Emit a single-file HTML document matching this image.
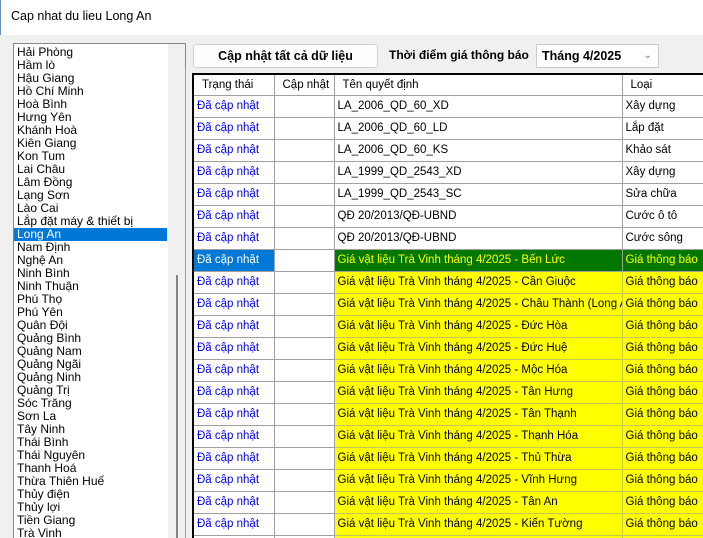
<!DOCTYPE html>
<html><head><meta charset="utf-8"><style>
*{margin:0;padding:0;box-sizing:border-box}
html,body{width:703px;height:538px;overflow:hidden}
body{background:#f0f0f0;font-family:"Segoe UI","Liberation Sans",sans-serif;font-size:12px;position:relative}
.title{position:absolute;left:0;top:0;width:703px;height:35px;background:#fff;border-left:1px solid #6d8fb3;font-size:12.5px;padding:9px 0 0 10px;color:#000}
.list{position:absolute;left:13px;top:43px;width:173px;height:500px;border:1px solid #828790;background:#fff;overflow:hidden;padding-top:2px}
.list .it{height:13px;line-height:13px;padding-left:3px;font-size:12px;width:153px;white-space:nowrap}
.list .sel{background:#0078d7;color:#fff}
.sb{position:absolute;left:154px;top:0;width:18px;height:500px;background:#f0f0f0}
.thumb{position:absolute;left:8px;top:231px;width:2px;height:280px;background:#858585}
.btn{position:absolute;left:193px;top:44px;width:185px;height:24px;background:#fdfdfd;border:1px solid #d0d0d0;border-radius:3px;text-align:center;line-height:22px;font-weight:bold;font-size:12.5px}
.lbl{position:absolute;left:389px;top:48px;font-weight:bold;font-size:12px}
.dd{position:absolute;left:536px;top:44px;width:123px;height:24px;background:#fff;border:1px solid #ccc;font-weight:bold;font-size:12.5px;line-height:22px;padding-left:5px}
.dd span{position:absolute;right:6px;top:0;font-weight:normal;color:#777;font-size:10px}
.grid{position:absolute;left:185px;top:68px;width:530px;height:480px;border-left:1px solid #a0a0a0;background:#f0f0f0;overflow:hidden}
table{position:absolute;left:6px;top:5px;width:521px;border-collapse:collapse;border-left:2px solid #000;border-top:2px solid #000;background:#fff;table-layout:fixed}
td{height:22px;border:1px solid #a0a0a0;padding:0 3px;white-space:nowrap;overflow:hidden;font-size:11.5px}
tr.h td{height:21px;padding-left:8px}
td.s{color:#0000ee}
tr.y td.n,tr.y td.l{background:#ff0;border-color:#c8c850}
tr.g td.n,tr.g td.l{background:#007800;color:#ff0}
tr.g td.s{background:#0078d7;color:#fff}
</style></head><body>
<div class="title">Cap nhat du lieu Long An</div>
<div class="list">
<div class="it">Hải Phòng</div><div class="it">Hầm lò</div><div class="it">Hậu Giang</div><div class="it">Hồ Chí Minh</div><div class="it">Hoà Bình</div><div class="it">Hưng Yên</div><div class="it">Khánh Hoà</div><div class="it">Kiên Giang</div><div class="it">Kon Tum</div><div class="it">Lai Châu</div><div class="it">Lâm Đồng</div><div class="it">Lạng Sơn</div><div class="it">Lào Cai</div><div class="it">Lắp đặt máy &amp; thiết bị</div><div class="it sel">Long An</div><div class="it">Nam Định</div><div class="it">Nghệ An</div><div class="it">Ninh Bình</div><div class="it">Ninh Thuận</div><div class="it">Phú Thọ</div><div class="it">Phú Yên</div><div class="it">Quân Đội</div><div class="it">Quảng Bình</div><div class="it">Quảng Nam</div><div class="it">Quảng Ngãi</div><div class="it">Quảng Ninh</div><div class="it">Quảng Trị</div><div class="it">Sóc Trăng</div><div class="it">Sơn La</div><div class="it">Tây Ninh</div><div class="it">Thái Bình</div><div class="it">Thái Nguyên</div><div class="it">Thanh Hoá</div><div class="it">Thừa Thiên Huế</div><div class="it">Thủy điện</div><div class="it">Thủy lợi</div><div class="it">Tiền Giang</div><div class="it">Trà Vinh</div>
<div class="sb"><div class="thumb"></div></div>
</div>
<div class="btn">Cập nhật tất cả dữ liệu</div>
<div class="lbl">Thời điểm giá thông báo</div>
<div class="dd">Tháng 4/2025<span>&#8964;</span></div>
<div class="grid">
<table>
<colgroup><col style="width:81px"><col style="width:60px"><col style="width:288px"><col style="width:92px"></colgroup>
<tr class="h"><td>Trạng thái</td><td>Cập nhật</td><td>Tên quyết định</td><td>Loại</td></tr>
<tr><td class="s">Đã cập nhật</td><td></td><td class="n">LA_2006_QD_60_XD</td><td class="l">Xây dựng</td></tr>
<tr><td class="s">Đã cập nhật</td><td></td><td class="n">LA_2006_QD_60_LD</td><td class="l">Lắp đặt</td></tr>
<tr><td class="s">Đã cập nhật</td><td></td><td class="n">LA_2006_QD_60_KS</td><td class="l">Khảo sát</td></tr>
<tr><td class="s">Đã cập nhật</td><td></td><td class="n">LA_1999_QD_2543_XD</td><td class="l">Xây dựng</td></tr>
<tr><td class="s">Đã cập nhật</td><td></td><td class="n">LA_1999_QD_2543_SC</td><td class="l">Sửa chữa</td></tr>
<tr><td class="s">Đã cập nhật</td><td></td><td class="n">QĐ 20/2013/QĐ-UBND</td><td class="l">Cước ô tô</td></tr>
<tr><td class="s">Đã cập nhật</td><td></td><td class="n">QĐ 20/2013/QĐ-UBND</td><td class="l">Cước sông</td></tr>
<tr class="g"><td class="s">Đã cập nhật</td><td></td><td class="n">Giá vật liệu Trà Vinh tháng 4/2025 - Bến Lức</td><td class="l">Giá thông báo</td></tr>
<tr class="y"><td class="s">Đã cập nhật</td><td></td><td class="n">Giá vật liệu Trà Vinh tháng 4/2025 - Cần Giuộc</td><td class="l">Giá thông báo</td></tr>
<tr class="y"><td class="s">Đã cập nhật</td><td></td><td class="n">Giá vật liệu Trà Vinh tháng 4/2025 - Châu Thành (Long An)</td><td class="l">Giá thông báo</td></tr>
<tr class="y"><td class="s">Đã cập nhật</td><td></td><td class="n">Giá vật liệu Trà Vinh tháng 4/2025 - Đức Hòa</td><td class="l">Giá thông báo</td></tr>
<tr class="y"><td class="s">Đã cập nhật</td><td></td><td class="n">Giá vật liệu Trà Vinh tháng 4/2025 - Đức Huệ</td><td class="l">Giá thông báo</td></tr>
<tr class="y"><td class="s">Đã cập nhật</td><td></td><td class="n">Giá vật liệu Trà Vinh tháng 4/2025 - Mộc Hóa</td><td class="l">Giá thông báo</td></tr>
<tr class="y"><td class="s">Đã cập nhật</td><td></td><td class="n">Giá vật liệu Trà Vinh tháng 4/2025 - Tân Hưng</td><td class="l">Giá thông báo</td></tr>
<tr class="y"><td class="s">Đã cập nhật</td><td></td><td class="n">Giá vật liệu Trà Vinh tháng 4/2025 - Tân Thạnh</td><td class="l">Giá thông báo</td></tr>
<tr class="y"><td class="s">Đã cập nhật</td><td></td><td class="n">Giá vật liệu Trà Vinh tháng 4/2025 - Thạnh Hóa</td><td class="l">Giá thông báo</td></tr>
<tr class="y"><td class="s">Đã cập nhật</td><td></td><td class="n">Giá vật liệu Trà Vinh tháng 4/2025 - Thủ Thừa</td><td class="l">Giá thông báo</td></tr>
<tr class="y"><td class="s">Đã cập nhật</td><td></td><td class="n">Giá vật liệu Trà Vinh tháng 4/2025 - Vĩnh Hưng</td><td class="l">Giá thông báo</td></tr>
<tr class="y"><td class="s">Đã cập nhật</td><td></td><td class="n">Giá vật liệu Trà Vinh tháng 4/2025 - Tân An</td><td class="l">Giá thông báo</td></tr>
<tr class="y"><td class="s">Đã cập nhật</td><td></td><td class="n">Giá vật liệu Trà Vinh tháng 4/2025 - Kiến Tường</td><td class="l">Giá thông báo</td></tr>
<tr class="y"><td class="s">Đã cập nhật</td><td></td><td class="n"></td><td class="l"></td></tr>
</table>
</div>
</body></html>
